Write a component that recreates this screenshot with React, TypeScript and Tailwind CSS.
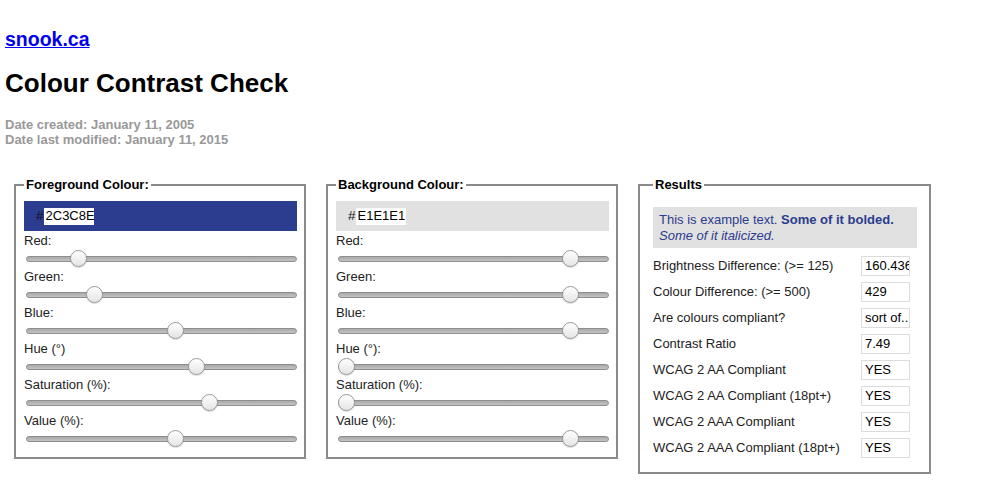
import React from 'react';

type Slider = { label: string; value: number };

interface ColourPanelProps {
  title: string;
  hex: string;
  swatch: string;
  sliders: Slider[];
}

function Track({ value }: { value: number }) {
  // thumb is 17px wide, track is 271px wide
  return (
    <div className="relative flex h-[20px] w-[271px] ml-[2px] items-center">
      <div className="h-[6px] w-full rounded-full border border-[#8e8e8e] bg-[linear-gradient(#a9a9a9,#c4c4c4)]" />
      <div
        className="absolute top-[1px] h-[17px] w-[17px] rounded-full border border-[#9a9a9a] bg-[linear-gradient(#ffffff,#e4e4e4)] shadow-[0_1px_1px_rgba(0,0,0,0.15)]"
        style={{ left: `${value * 254}px` }}
      />
    </div>
  );
}

function ColourPanel({ title, hex, swatch, sliders }: ColourPanelProps) {
  return (
    <fieldset className="w-[292px] border-2 border-[#8a8a8a] pl-[8px] pr-[7px] pt-[8px] pb-[8px]">
      <legend className="px-[2px] text-[13px] leading-4 font-bold text-black">{title}</legend>
      <div className={`flex h-[30px] items-center pl-[12px] ${swatch}`}>
        <span className="text-[13.5px] leading-4 text-[#111]">#</span>
        <input
          readOnly
          value={hex}
          className="h-[17px] w-[50px] bg-white pl-[2px] text-[13px] text-black outline-none"
        />
      </div>
      <div className="mt-[2px]">
        {sliders.map((s) => (
          <div key={s.label}>
            <div className="h-[16px] text-[13px] leading-4 text-[#222]">{s.label}</div>
            <Track value={s.value} />
          </div>
        ))}
      </div>
    </fieldset>
  );
}

const results = [
  { label: 'Brightness Difference: (>= 125)', value: '160.436' },
  { label: 'Colour Difference: (>= 500)', value: '429' },
  { label: 'Are colours compliant?', value: 'sort of..' },
  { label: 'Contrast Ratio', value: '7.49' },
  { label: 'WCAG 2 AA Compliant', value: 'YES' },
  { label: 'WCAG 2 AA Compliant (18pt+)', value: 'YES' },
  { label: 'WCAG 2 AAA Compliant', value: 'YES' },
  { label: 'WCAG 2 AAA Compliant (18pt+)', value: 'YES' },
];

export default function App() {
  const fg = { r: 44, g: 60, b: 142 };
  const fgHue = (240 + (60 * (fg.r - fg.g)) / (fg.b - fg.r)) / 360;
  const fgSat = (fg.b - fg.r) / fg.b;

  const fgSliders: Slider[] = [
    { label: 'Red:', value: fg.r / 255 },
    { label: 'Green:', value: fg.g / 255 },
    { label: 'Blue:', value: fg.b / 255 },
    { label: 'Hue (°)', value: fgHue },
    { label: 'Saturation (%):', value: fgSat },
    { label: 'Value (%):', value: fg.b / 255 },
  ];

  const bgSliders: Slider[] = [
    { label: 'Red:', value: 225 / 255 },
    { label: 'Green:', value: 225 / 255 },
    { label: 'Blue:', value: 225 / 255 },
    { label: 'Hue (°):', value: 0 },
    { label: 'Saturation (%):', value: 0 },
    { label: 'Value (%):', value: 225 / 255 },
  ];

  return (
    <div className="min-h-[500px] bg-white px-[5px] pt-[28px] font-['Liberation_Sans',Arial,sans-serif] text-black">
      <a href="#" className="block w-fit text-[19.5px] leading-[23px] font-bold text-[#0000ee] underline">
        snook.ca
      </a>
      <h1 className="mt-[17px] text-[26px] leading-[30px] font-bold">Colour Contrast Check</h1>
      <div className="mt-[19px] text-[13px] leading-[15px] font-bold text-[#999]">
        <p>Date created: January 11, 2005</p>
        <p>Date last modified: January 11, 2015</p>
      </div>

      <div className="mt-[30px] ml-[9px] flex items-start gap-[20px]">
        <ColourPanel title="Foreground Colour:" hex="2C3C8E" swatch="bg-[#2c3c8e]" sliders={fgSliders} />
        <ColourPanel title="Background Colour:" hex="E1E1E1" swatch="bg-[#e1e1e1]" sliders={bgSliders} />

        <fieldset className="w-[293px] border-2 border-[#8a8a8a] pl-[13px] pr-[12px] pt-[14px] pb-[11px]">
          <legend className="px-[2px] text-[13px] leading-4 font-bold">Results</legend>
          <div className="bg-[#e1e1e1] px-[6px] pt-[5px] pb-[4px] text-[13px] leading-4 text-[#2c3c8e]">
            This is example text. <strong>Some of it bolded.</strong>
            <br />
            <em>Some of it italicized.</em>
          </div>
          <div className="mt-[5px] grid grid-cols-[208px_49px]">
            {results.map((r) => (
              <React.Fragment key={r.label}>
                <div className="h-[26px] text-[13px] leading-[26px] text-[#222]">{r.label}</div>
                <div className="h-[26px]">
                  <input
                    readOnly
                    value={r.value}
                    className="h-[20px] w-[49px] border border-[#dcdcdc] bg-white pl-[3px] text-[13px] text-black outline-none"
                  />
                </div>
              </React.Fragment>
            ))}
          </div>
        </fieldset>
      </div>
    </div>
  );
}
